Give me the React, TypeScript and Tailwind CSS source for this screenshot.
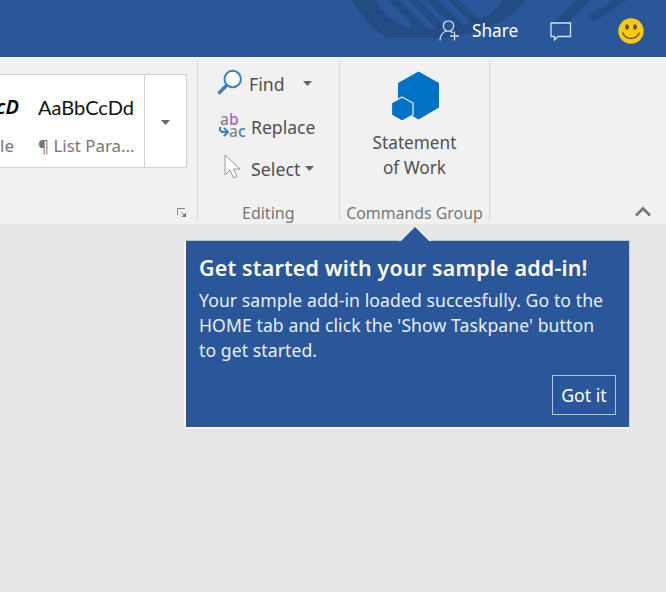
import React from "react";

function TitleBar() {
  return (
    <header className="relative flex h-[57px] shrink-0 items-start bg-[#2a579a]">
      <svg className="absolute left-[340px] top-0" width="326" height="57" viewBox="0 0 326 57">
        <g fill="#234b84">
          <path d="M12 0C21 15 32 29 47 38H114C137 30 166 27 185 0H163C157 9 149 16 139 19L119 0H108L130 22L124 26L98 0H86L115 28L108 29L79 0H69L96 29L88 29L59 0H48L70 22V29C54 24 43 13 35 0Z" />
          <path d="M237 0H251L224 26L214 22ZM273 0H287L254 22L248 16Z" />
        </g>
      </svg>
      <button className="relative ml-[439px] mt-[17px] flex h-7 items-center text-white">
        <svg width="22" height="24" viewBox="0 0 22 24" fill="none" stroke="#d5dff0" strokeWidth="1.3">
          <circle cx="9.5" cy="7" r="5.2" />
          <path d="M1 21.5C1 16 4 13.2 7.5 12M11 12L14 14M15.5 12.5V21.5M11 17H20" />
        </svg>
        <span className="ml-[11px] text-[17.2px] leading-7">Share</span>
      </button>
      <svg className="relative ml-[32px] mt-[22px]" width="23" height="20" viewBox="0 0 23 20" fill="none" stroke="#d5dff0" strokeWidth="1.3">
        <path d="M1 1H20.5V14.5H8L4.5 18V14.5H1Z" />
      </svg>
      <svg className="relative ml-[45px] mt-[18px]" width="26" height="26" viewBox="0 0 26 26">
        <circle cx="13" cy="13" r="12.7" fill="#ffc90e" />
        <ellipse cx="9" cy="9" rx="2" ry="2.8" fill="#69572d" />
        <ellipse cx="17" cy="9" rx="2" ry="2.8" fill="#69572d" />
        <path d="M4.5 14.5C8 22.5 18 22.5 21.5 14.5" fill="none" stroke="#69572d" strokeWidth="1.6" />
      </svg>
    </header>
  );
}

function Caret({ className = "" }: { className?: string }) {
  return (
    <svg className={className} width="9" height="5" viewBox="0 0 9 5">
      <path d="M0 0H9L4.5 5Z" fill="#666" />
    </svg>
  );
}

function StylesGroup() {
  return (
    <section className="flex h-full w-[197px] flex-col pt-[17px]">
      <div className="flex h-[94px] w-[187px] border border-l-0 border-[#d0d3d4] bg-white">
        <div className="flex w-[144px] shrink-0 overflow-hidden">
          <div className="flex w-[38px] shrink-0 flex-col pt-[18px]">
            <span className="-ml-[4px] whitespace-nowrap text-[20px] font-semibold italic leading-7 text-black">cD</span>
            <span className="mt-[11px] text-[17px] leading-7 text-[#777]">le</span>
          </div>
          <div className="flex w-[97px] flex-col overflow-hidden whitespace-nowrap pt-[18px]">
            <span className="font-['Lato','Liberation_Sans',sans-serif] text-[20px] leading-7 text-[#111]">AaBbCcDd</span>
            <span className="mt-[11px] text-[16.9px] leading-7 text-[#777]">¶ List Para...</span>
          </div>
        </div>
        <div className="flex flex-1 items-center justify-center border-l border-[#d0d3d4]">
          <Caret className="mt-0.5" />
        </div>
      </div>
      <svg className="ml-[177px] mt-[40px]" width="10" height="10" viewBox="0 0 10 10" fill="none" stroke="#888" strokeWidth="1">
        <path d="M.5 7V.5H8M4 4L8 8" />
        <path d="M9 4.5V9H4.5Z" fill="#777" stroke="none" />
      </svg>
    </section>
  );
}

function EditingGroup() {
  return (
    <section className="flex h-full w-[142px] flex-col pl-[20px] pt-[10px] text-[17.8px] leading-[34px] text-[#505050]">
      <div className="flex h-[43px] shrink-0 items-start">
        <svg className="mt-[2px] shrink-0" width="28" height="28" viewBox="0 0 28 28" fill="none" stroke="#3f7fc0">
          <path d="M1.5 24.5L10 16" strokeWidth="3.6" />
          <circle cx="15.7" cy="10" r="8.2" fill="#fff" strokeWidth="2" />
        </svg>
        <span className="ml-[4px] text-[17.7px]">Find</span>
        <Caret className="ml-[18px] mt-[14px]" />
      </div>
      <div className="flex h-[42px] shrink-0 items-start">
        <div className="flex h-[30px] w-[29px] shrink-0 flex-col pl-[3px] pt-[3px] text-[15.5px] font-medium leading-[12px] text-[#858585]">
          <span>a<span className="text-[#a566c4]">b</span></span>
          <span className="flex">
            <svg className="-ml-px shrink-0" width="10" height="13" viewBox="0 0 10 13" fill="none" stroke="#3f7fc0" strokeWidth="2"><path d="M1 2V4Q1 7 4 7H8M5 3L9 7L5 11" /></svg>
            a<span className="text-[#3f7fc0]">c</span>
          </span>
        </div>
        <span className="ml-[5px] text-[17.6px]">Replace</span>
      </div>
      <div className="flex h-[43px] shrink-0 items-start">
        <svg className="ml-[7px] mt-[2px] shrink-0" width="18" height="28" viewBox="0 0 18 28">
          <path d="M1 1V21L6 16L9.5 24L13 22.5L9.5 15H16Z" fill="#fff" stroke="#999" />
        </svg>
        <span className="ml-[9px]">Select</span>
        <Caret className="ml-[5px] mt-[14px]" />
      </div>
      <div className="mt-[8px] pl-[25px] text-[16px] leading-5 text-[#777]">Editing</div>
    </section>
  );
}

function CommandsGroup() {
  return (
    <section className="flex h-full w-[150px] flex-col items-center pl-px pt-[14px]">
      <svg className="shrink-0" width="50" height="51" viewBox="0 0 50 51">
        <path d="M28.5 0.5L49 12V36.5L28.5 48.5L8 36.5V12Z" fill="#0072c6" />
        <path d="M12 26L23 32V44L12 50L1.5 44V32Z" fill="#0072c6" stroke="#f1f1f1" strokeWidth="1.2" />
      </svg>
      <div className="mt-[8px] text-center text-[17.2px] leading-[25px] text-[#505050]">Statement<br />of Work</div>
      <div className="mt-[23px] whitespace-nowrap text-[15.9px] leading-5 text-[#777]">Commands Group</div>
    </section>
  );
}

const Divider = () => <div className="-mr-px mt-[3px] h-[161px] w-px shrink-0 bg-[#d9d9d9]" />;

function Callout() {
  return (
    <aside className="relative ml-[184px] mt-[16px] flex h-[189px] w-[446px] flex-col border-2 border-r border-t border-[#fdfdfd] border-r-[#c5cfe0] border-t-[#bcc4cf] bg-[#2a579a] pl-[13px] pr-[13px] pt-[12px] text-white">
      <svg className="absolute -top-[15px] left-[213px]" width="32" height="17" viewBox="0 0 32 17">
        <path d="M0 14.5H2L16 .5L30 14.5H32" fill="none" stroke="#f4f4f4" strokeWidth="1" />
        <path d="M1 16L16 1L31 16V17H1Z" fill="#2a579a" />
      </svg>
      <h1 className="whitespace-nowrap text-[21.4px] font-semibold leading-[29px] tracking-[0.2px]">Get started with your sample add-in!</h1>
      <p className="mt-[6px] whitespace-nowrap text-[17.6px] leading-[25px] tracking-[0.08px] text-[#e8eef7]">
        Your sample add-in loaded succesfully. Go to the<br />
        HOME tab and click the 'Show Taskpane' button<br />
        to get started.
      </p>
      <button className="mt-[12px] h-[40px] w-[64px] self-end whitespace-nowrap border border-[#b4c4de] text-[17.7px]">Got it</button>
    </aside>
  );
}

export default function App() {
  return (
    <main className="flex h-[592px] w-[666px] flex-col overflow-hidden bg-[#e6e6e6] font-['Noto_Sans','Open_Sans',sans-serif]">
      <TitleBar />
      <div className="flex h-[167px] shrink-0 bg-[#f1f1f1]">
        <StylesGroup />
        <Divider />
        <EditingGroup />
        <Divider />
        <CommandsGroup />
        <Divider />
        <div className="flex flex-1 items-end justify-end pb-[7px] pr-[15px]">
          <svg width="16" height="11" viewBox="0 0 16 11" fill="none" stroke="#777" strokeWidth="2.8"><path d="M1 9.5L8 2.5L15 9.5" /></svg>
        </div>
      </div>
      <Callout />
    </main>
  );
}
